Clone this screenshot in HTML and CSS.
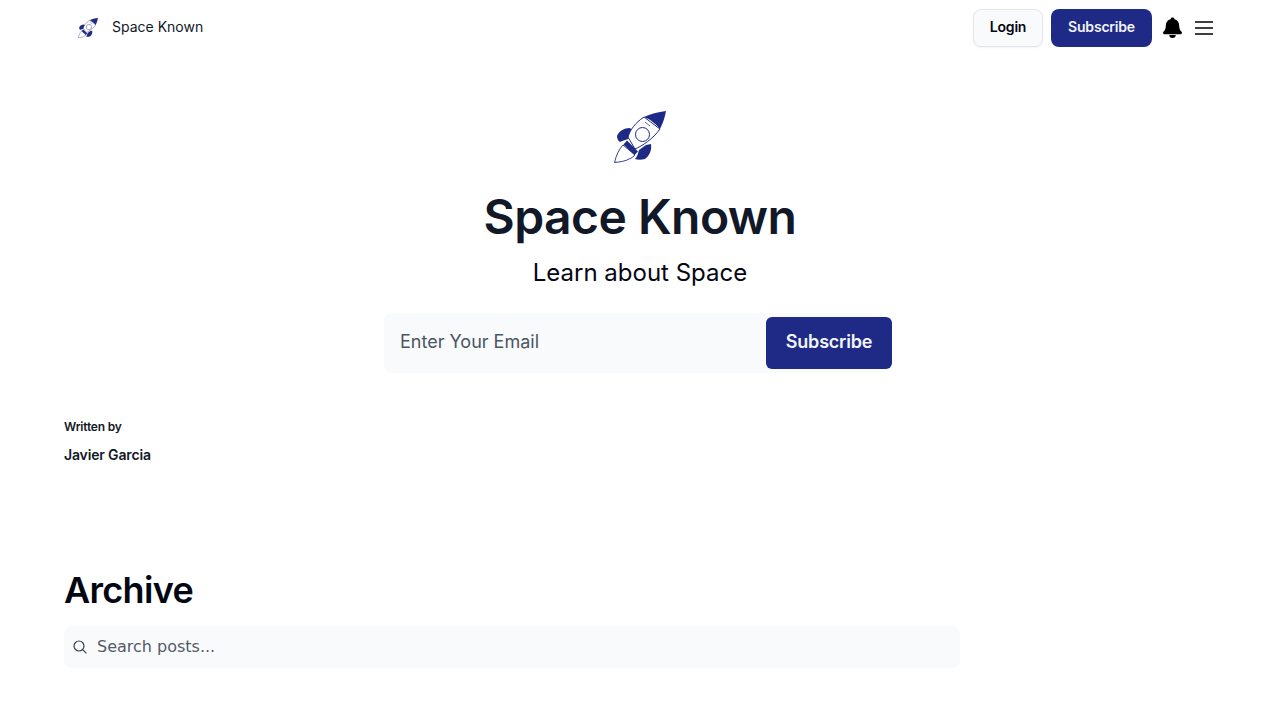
FILE: index.html
```html
<!DOCTYPE html>
<html lang="en">
<head>
    <meta charset="UTF-8">
    <meta name="viewport" content="width=device-width, initial-scale=1.0">
    <title>Space Known</title>
    <link rel="stylesheet" href="styles.css">
</head>
<body>
    <svg class="defs" width="0" height="0">
        <symbol id="rocket" viewBox="0 0 52 52">
            <path d="M16 17C10 17 5 20 3 25C3 27 4 30 6 31C8 30 11 29 14 28L19 20Z" fill="#1e2a85"/>
            <path d="M37 33C38 40 35 45 31 48C27 49 24 49 21 48C23 46 24 43 25 39L32 34Z" fill="#1e2a85"/>
            <path d="M30 6C21 12 16 19 14 26L21 38C28 35 39 28 46 18Z" fill="#fff" stroke="#1e2a85" stroke-width="1"/>
            <path d="M52 0C44 1 36 3 30 6C36 8 42 13 46 18C49 12 51 6 52 0Z" fill="#1e2a85"/>
            <path d="M9 34C5 38 2 45 .5 51.500C6 51 12 50 15 48C18 47 20 45 21 44Z" fill="#fff" stroke="#1e2a85" stroke-width="0.9"/>
            <path d="M9.500 33.500L13 29.500L24 40.500L20.500 44Z" fill="#1e2a85"/>
            <circle cx="28.500" cy="23.500" r="7" fill="#fff" stroke="#1e2a85" stroke-width="1"/>
            <path d="M31 11L36 15" fill="none" stroke="#1e2a85" stroke-width="0.7"/>
        </symbol>
    </svg>

    <header class="topbar">
        <a class="brand" href="#">
            <svg class="brand-logo"><use href="#rocket"/></svg>
            <span>Space Known</span>
        </a>
        <div class="actions">
            <button class="btn btn-light">Login</button>
            <button class="btn btn-primary">Subscribe</button>
            <svg class="bell" viewBox="0 0 20 22">
                <path d="M10 0.500C8.800 0.500 8 1.200 8 2.200 4.800 3 3 5.400 3 8.600c0 3.400-1 5.400-2.600 7-.6.600-.4 2.200.8 2.400h17.600c1.200-.2 1.400-1.800.8-2.400C18 14 17 12 17 8.600c0-3.200-1.800-5.600-5-6.400C12 1.200 11.200 0.500 10 0.500Z" fill="#000"/>
                <path d="M6.600 19a3.400 3 0 0 0 6.800 0Z" fill="#000"/>
            </svg>
            <svg class="menu" viewBox="0 0 18 14">
                <path d="M0 1h18M0 7h18M0 13h18" stroke="#000" stroke-width="1.6" fill="none"/>
            </svg>
        </div>
    </header>

    <section class="hero">
        <svg class="hero-logo"><use href="#rocket"/></svg>
        <h1>Space Known</h1>
        <p class="tagline">Learn about Space</p>
        <form class="signup">
            <input type="email" placeholder="Enter Your Email">
            <button type="button" class="signup-btn">Subscribe</button>
        </form>
    </section>

    <section class="byline">
        <div class="byline-label">Written by</div>
        <div class="byline-name">Javier Garcia</div>
    </section>

    <section class="archive">
        <h2>Archive</h2>
        <div class="search">
            <svg class="search-icon" viewBox="0 0 14 14">
                <circle cx="6" cy="6" r="5" fill="none" stroke="#374151" stroke-width="1.2"/>
                <path d="M9.700 9.700L13.400 13.400" stroke="#374151" stroke-width="1.2"/>
            </svg>
            <input type="text" placeholder="Search posts...">
        </div>
    </section>
</body>
</html>
```

FILE: styles.css
```css
* {
    box-sizing: border-box;
}

body {
    margin: 0;
    font-family: 'Inter', sans-serif;
    color: #111827;
    background: #fff;
}

.defs {
    position: absolute;
}

.topbar {
    display: flex;
    justify-content: space-between;
    align-items: center;
    height: 55px;
    padding: 0 67px 0 78px;
}

.brand {
    display: flex;
    align-items: center;
    gap: 14px;
    font-size: 14px;
    line-height: 20px;
    margin-top: -1px;
    color: #111827;
    text-decoration: none;
}

.brand-logo {
    width: 20px;
    height: 20px;
    margin-top: 1px;
}

.actions {
    display: flex;
    align-items: center;
}

.btn {
    height: 38px;
    padding: 0 0 2px;
    border-radius: 8px;
    font-family: inherit;
    font-size: 14px;
    font-weight: 600;
    letter-spacing: -0.2px;
}

.btn-light {
    width: 70px;
    margin-right: 8px;
    background: #f9fafb;
    border: 1px solid #e5e7eb;
    box-shadow: 0 1px 2px rgba(0, 0, 0, 0.05);
    color: #030712;
}

.btn-primary {
    width: 101px;
    margin-right: 11px;
    background: #1e2a85;
    border: none;
    color: #f3f4f6;
}

.bell {
    width: 19px;
    height: 21px;
    margin-right: 13px;
}

.menu {
    width: 18px;
    height: 14px;
}

.hero {
    display: flex;
    flex-direction: column;
    align-items: center;
    padding-top: 56px;
}

.hero-logo {
    width: 52px;
    height: 52px;
}

h1 {
    margin: 24px 0 0;
    font-size: 48px;
    line-height: 60px;
    font-weight: 600;
    letter-spacing: -0.55px;
}

.tagline {
    margin: 10px 0 0;
    font-size: 24px;
    line-height: 32px;
    color: #030712;
}

.signup {
    display: flex;
    align-items: center;
    justify-content: space-between;
    width: 512px;
    height: 60px;
    margin-top: 24px;
    padding: 4px;
    background: linear-gradient(90deg, #f9fafb 95%, #fff);
    border-radius: 8px;
}

.signup input {
    flex: 1;
    min-width: 0;
    padding: 0 12px 3px;
    background: transparent;
    border: none;
    outline: none;
    font-family: inherit;
    font-size: 18px;
}

.signup input::placeholder {
    color: #4b5563;
    opacity: 1;
}

.search input::placeholder {
    color: #565b68;
    opacity: 1;
}

.signup-btn {
    width: 126px;
    height: 52px;
    padding: 0 0 3px;
    background: #1e2a85;
    border: none;
    border-radius: 6px;
    color: #f3f4f6;
    font-family: inherit;
    font-size: 18px;
    font-weight: 600;
    letter-spacing: -0.2px;
}

.byline {
    margin-top: 46px;
    padding-left: 64px;
}

.byline-label {
    font-size: 12px;
    line-height: 16px;
    font-weight: 600;
    letter-spacing: -0.2px;
}

.byline-name {
    margin-top: 10px;
    font-size: 14px;
    line-height: 20px;
    font-weight: 600;
    letter-spacing: -0.15px;
}

.archive {
    margin-top: 101px;
    padding-left: 64px;
    width: 960px;
}

h2 {
    margin: 0;
    font-size: 36px;
    line-height: 48px;
    font-weight: 600;
    letter-spacing: -0.7px;
    color: #030712;
}

.search {
    display: flex;
    align-items: center;
    gap: 10px;
    height: 42px;
    margin-top: 12px;
    padding-left: 9px;
    background: #f9fafb;
    border-radius: 8px;
}

.search-icon {
    width: 14px;
    height: 14px;
    flex: none;
}

.search input {
    flex: 1;
    background: transparent;
    border: none;
    outline: none;
    padding: 0 0 2px;
    font-family: 'DejaVu Sans', sans-serif;
    font-size: 16px;
}
```
